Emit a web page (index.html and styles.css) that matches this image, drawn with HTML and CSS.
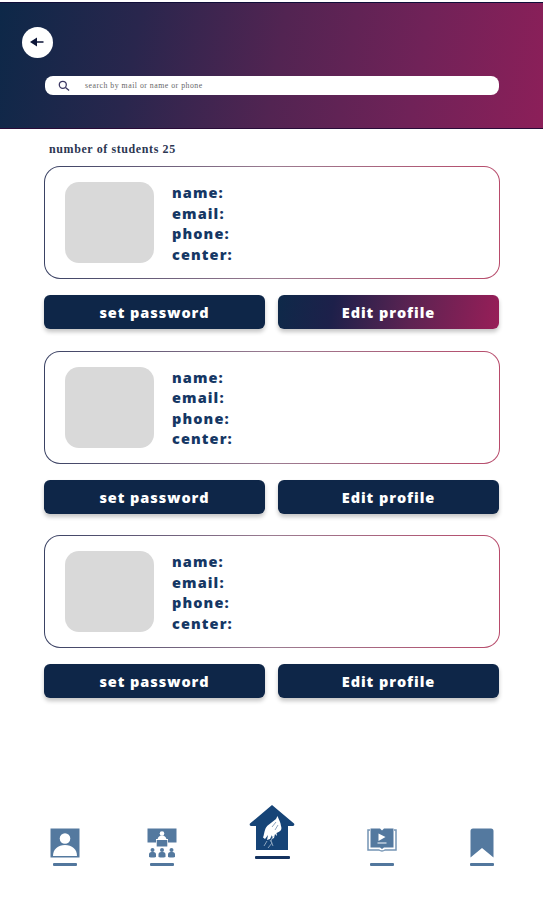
FILE: index.html
```html
<!DOCTYPE html>
<html lang="en">
<head>
<meta charset="utf-8">
<title>Students</title>
<link rel="stylesheet" href="styles.css">
</head>
<body>
<header class="header">
  <button class="back" aria-label="Back"><svg width="30" height="30" viewBox="0 0 30 30"><path d="M8 15l7-4.500v3.800h6.500v1.400H15v3.800z"/></svg></button>
  <div class="search">
    <svg width="12" height="12" viewBox="0 0 12 12"><circle cx="4.800" cy="4.800" r="3.500"/><path d="M7.500 7.500l3.600 3"/></svg>
    <span class="hint">search by mail or name or phone</span>
  </div>
</header>
<main class="content">
  <p class="count">number of students 25</p>
  <section class="student">
    <div class="card"><div class="photo"></div><div class="fields"><span>name:</span><span>email:</span><span>phone:</span><span>center:</span></div></div>
    <div class="actions"><button class="btn">set password</button><button class="btn edit accent">Edit profile</button></div>
  </section>
  <section class="student">
    <div class="card"><div class="photo"></div><div class="fields"><span>name:</span><span>email:</span><span>phone:</span><span>center:</span></div></div>
    <div class="actions"><button class="btn">set password</button><button class="btn edit">Edit profile</button></div>
  </section>
  <section class="student">
    <div class="card"><div class="photo"></div><div class="fields"><span>name:</span><span>email:</span><span>phone:</span><span>center:</span></div></div>
    <div class="actions"><button class="btn">set password</button><button class="btn edit">Edit profile</button></div>
  </section>
</main>
<nav class="nav">
  <a class="item"><svg width="30" height="30" viewBox="0 0 30 30"><path class="fill" d="M.5.5h29v29H.5z"/><circle class="light" cx="15" cy="10.500" r="5.300"/><path class="light" d="M3 28c0-7 5-11 12-11s12 4 12 11z"/></svg></a>
  <a class="item"><svg width="30" height="30" viewBox="0 0 30 30"><path class="fill" d="M.5.5h29v14H21v-3.600H9v3.600H.5z"/><circle class="light" cx="15" cy="5.500" r="2.300"/><path class="light" d="M10.500 12c0-3 2-4.500 4.500-4.500s4.500 1.500 4.500 4.500z"/><path class="fill" d="M9.700 12h10.600v6.500H9.700z"/><circle class="fill" cx="5.500" cy="22" r="2"/><circle class="fill" cx="15" cy="22" r="2"/><circle class="fill" cx="24.500" cy="22" r="2"/><path class="fill" d="M2 29v-2.500q0-2.500 2.500-2.500h2q2.500 0 2.500 2.500V29q-3.500 1-7 0zM11.500 29v-2.500q0-2.500 2.500-2.500h2q2.500 0 2.500 2.500V29q-3.500 1-7 0zM21 29v-2.500q0-2.500 2.500-2.500h2q2.500 0 2.500 2.500V29q-3.500 1-7 0z"/></svg></a>
  <a class="item home"><svg width="46" height="46" viewBox="0 0 46 46"><path class="dark" d="M23 0L1 18.500q-1 2 1 2.500h5v24h32V21h5q2-.5 1-2.500z"/><path class="light" d="M28.500 11l-1.500 3-7 5.500c-5 3.500-4 8-6 13l2 1.500 3-4-1 5 3-1 2-4 0 4 2-1 1-4 2 2-.5-3c5-2 5.500-4 4.500-7-.5-4-2-6-3.500-10z"/><path class="detail" d="M23 22l4-5M26 25l3-5M18 36l-3 5M21 35l2 3-4 5M24 31l-2 5 2 5"/></svg></a>
  <a class="item"><svg width="30" height="30" viewBox="0 0 30 30"><path class="outline" d="M3 2H1v20h11q3 2 6 0h11V2h-2"/><path class="fill" d="M3.500.5H13l2 2 2-2h9.500v19H17l-2 1.500-2-1.500H3.500z"/><path class="light" d="M11.500 5.500L18.500 9l-7 4z"/><path class="caption" d="M10.500 15h9"/></svg></a>
  <a class="item"><svg width="30" height="30" viewBox="0 0 30 30"><path class="fill" d="M6 .5h18q2.500 0 2.500 2.500v26.500L15 20 3.500 29.500V3Q3.500.5 6 .5z"/></svg></a>
</nav>
</body>
</html>
```

FILE: styles.css
```css
* { box-sizing: border-box; }
body { margin: 0; height: 900px; padding-top: 2px; background: #fff; display: flex; flex-direction: column; }
button { border: 0; padding: 0; }
svg { display: block; flex: none; }
.header { height: 127px; padding: 23.500px 44px 0 22px; background: linear-gradient(100deg, #0d2848 0%, #29264d 25%, #522452 51%, #702258 76%, #8c1f59 100%); border-top: 1px solid #100e39; border-bottom: 1px solid #290b38; }
.back { display: block; width: 31px; height: 31px; border-radius: 50%; background: #fff; }
.back path { fill: #0c1538; }
.search { margin: 18.500px 0 0 22.500px; height: 19px; border-radius: 8px; background: #fff; display: flex; align-items: center; padding-left: 13.500px; }
.search svg { fill: none; stroke: #3c3863; stroke-width: 1.300; }
.hint { margin-left: 15px; font: 7.800px "Liberation Serif", serif; letter-spacing: .5px; color: #666; white-space: nowrap; }
.content { padding: 13px 44px 0; }
.count { margin: 0 0 10px 5px; font: bold 12px/14px "Liberation Serif", serif; letter-spacing: .6px; color: #2c3652; white-space: nowrap; }
.student { height: 184.600px; }
.card { height: 113px; width: 456px; border: 1.500px solid transparent; border-radius: 16px; background: linear-gradient(#fff, #fff) padding-box, linear-gradient(90deg, #3a4264, #9b7c91 50%, #b84b6b) border-box; display: flex; padding: 15px 20px; }
.photo { width: 89px; height: 81px; border-radius: 14px; background: #d9d9d9; }
.fields { margin: 1px 0 0 18px; display: flex; flex-direction: column; font: 800 14.500px/20.500px "Open Sans", sans-serif; letter-spacing: 1.100px; color: #153764; }
.actions { display: flex; gap: 13px; margin-top: 16px; width: 455px; }
.btn { flex: 1; height: 34px; border-radius: 6px; background: #0e2648; color: #fff; font: 800 14.500px/34px "Open Sans", sans-serif; letter-spacing: .95px; box-shadow: 0 3px 4px rgba(0, 0, 0, .23); padding-top: 1px; }
.accent { background: linear-gradient(100deg, #0e2949 0%, #1d204a 25%, #5d2352 60%, #981e58 100%); }
.nav { margin-top: auto; height: 97px; padding-left: 50px; display: flex; align-items: flex-start; }
.item { width: 30px; margin-top: 25px; display: flex; flex-direction: column; align-items: center; }
.item + .item { margin-left: 67px; }
.item::after { content: ""; width: 24px; height: 2.500px; margin-top: 5px; border-radius: 1px; background: #52779d; }
.item + .home { width: 46px; margin-top: 2px; margin-left: 72px; }
.item.home + .item { margin-left: 72px; }
.item.home + .item + .item { margin-left: 70px; }
.home::after { width: 35px; background: #14325f; }
.fill { fill: #54799f; }
.light { fill: #fff; }
.dark { fill: #164477; }
.detail { fill: none; stroke: #8ca4be; stroke-width: 1; }
.outline { fill: none; stroke: #7494b4; stroke-width: 1.500; }
.caption { stroke: #c2d0df; stroke-width: 1.500; }
```
